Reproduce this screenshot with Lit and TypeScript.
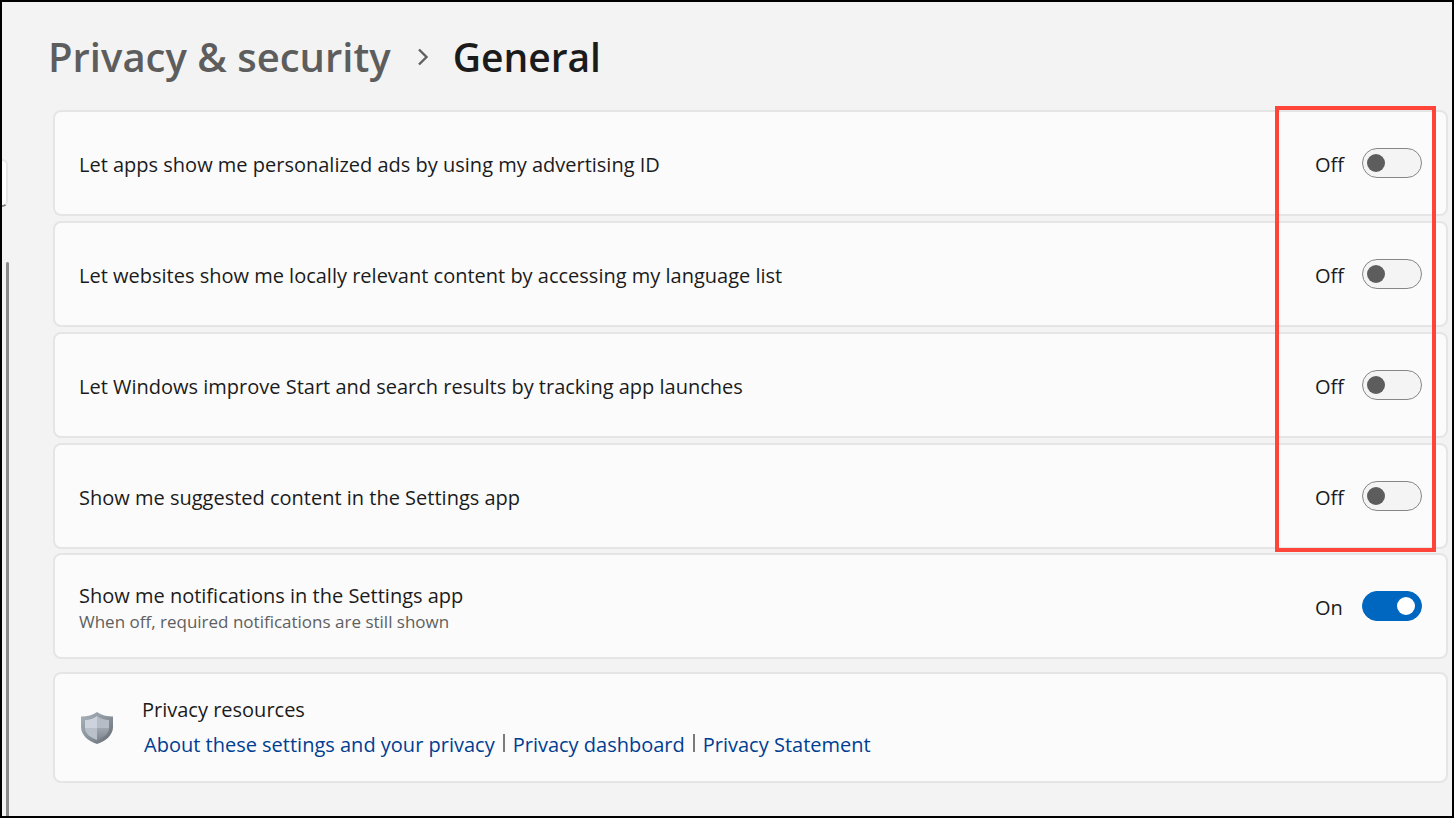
import { LitElement, html, css, nothing } from "lit";
import { customElement, property, state } from "lit/decorators.js";

interface Setting {
  id: string;
  title: string;
  note?: string;
  on: boolean;
}

@customElement("setting-card")
class SettingCard extends LitElement {
  @property() name = "";
  @property() heading = "";
  @property() note = "";
  @property({ type: Boolean }) on = false;

  static styles = css`
    :host {
      display: block;
    }
    .card {
      box-sizing: border-box;
      display: flex;
      align-items: center;
      min-height: 106px;
      padding: 16px 24px;
      border: 2px solid #e5e5e5;
      border-radius: 8px;
      background: #fbfbfb;
    }
    .text {
      flex: 1;
      display: flex;
      flex-direction: column;
      padding-top: 4px;
    }
    .title {
      font-size: 20px;
      line-height: 28px;
      color: #1b1b1b;
    }
    .note {
      font-size: 17px;
      line-height: 24px;
      color: #606060;
    }
    .status {
      width: 47px;
      padding-top: 4px;
      font-size: 20px;
      line-height: 28px;
      color: #1b1b1b;
    }
    .switch {
      appearance: none;
      box-sizing: border-box;
      display: flex;
      align-items: center;
      width: 60px;
      height: 30px;
      margin: 0;
      padding: 0 4px;
      border: 1px solid #868686;
      border-radius: 15px;
      background: #f4f4f4;
    }
    .switch::before {
      content: "";
      width: 18px;
      height: 18px;
      border-radius: 50%;
      background: #5d5d5d;
    }
    .switch:checked {
      justify-content: flex-end;
      padding: 0 6px;
      border-color: #0067c0;
      background: #0067c0;
    }
    .switch:checked::before {
      background: #ffffff;
    }
  `;

  private toggle(e: Event) {
    this.on = (e.target as HTMLInputElement).checked;
  }

  render() {
    return html`
      <div class="card">
        <label class="text" for=${this.name}>
          <span class="title">${this.heading}</span>
          ${this.note ? html`<span class="note">${this.note}</span>` : nothing}
        </label>
        <span class="status">${this.on ? "On" : "Off"}</span>
        <input
          class="switch"
          type="checkbox"
          role="switch"
          id=${this.name}
          .checked=${this.on}
          @change=${this.toggle}
        />
      </div>
    `;
  }
}

@customElement("app-root")
class AppRoot extends LitElement {
  @state() private settings: Setting[] = [
    { id: "ads", title: "Let apps show me personalized ads by using my advertising ID", on: false },
    { id: "language", title: "Let websites show me locally relevant content by accessing my language list", on: false },
    { id: "launches", title: "Let Windows improve Start and search results by tracking app launches", on: false },
    { id: "suggested", title: "Show me suggested content in the Settings app", on: false },
    {
      id: "notifications",
      title: "Show me notifications in the Settings app",
      note: "When off, required notifications are still shown",
      on: true,
    },
  ];

  static styles = css`
    :host {
      display: block;
      font-family: "Segoe UI", "Open Sans", "Noto Sans", sans-serif;
      color: #1b1b1b;
    }
    .window {
      box-sizing: border-box;
      display: flex;
      min-height: 100vh;
      border: 2px solid #000000;
      background: #f3f3f3;
      overflow: hidden;
    }
    .nav {
      display: flex;
      flex-direction: column;
      gap: 55px;
      width: 7px;
      padding-top: 157px;
    }
    .search-edge {
      box-sizing: border-box;
      height: 48px;
      width: 6px;
      border: 2px solid #e5e5e5;
      border-left: 0;
      border-bottom-color: #868686;
      border-radius: 0 6px 6px 0;
      background: #ffffff;
    }
    .scrollbar {
      flex: 1;
      width: 3px;
      margin-left: 4px;
      border-radius: 2px 2px 0 0;
      background: #8a8a8a;
    }
    .main {
      flex: 1;
      padding: 27px 4px 32px 44px;
    }
    .crumbs {
      display: flex;
      align-items: center;
      margin: 0 0 25px -5px;
      font-size: 40px;
      line-height: 56px;
      font-weight: 600;
    }
    .parent {
      color: #5d5d5d;
      text-decoration: none;
    }
    .chevron {
      width: 12px;
      height: 18px;
      margin: 0 24px 0 26px;
    }
    .current {
      margin: 0;
      font-size: 39px;
      line-height: 56px;
      font-weight: 600;
    }
    .group {
      position: relative;
      display: grid;
      gap: 5px;
      margin-bottom: 4px;
    }
    .highlight {
      position: absolute;
      top: -4px;
      bottom: -3px;
      right: 12px;
      width: 161px;
      box-sizing: border-box;
      border: 4px solid #ff4539;
      pointer-events: none;
    }
    .resources {
      box-sizing: border-box;
      display: flex;
      align-items: center;
      gap: 27px;
      min-height: 111px;
      margin-top: 13px;
      padding: 16px 24px;
      border: 2px solid #e5e5e5;
      border-radius: 8px;
      background: #fbfbfb;
    }
    .shield {
      width: 36px;
      height: 36px;
    }
    .resources-title {
      margin: 0 0 7px;
      font-size: 20px;
      line-height: 28px;
      font-weight: 400;
    }
    .links {
      display: flex;
      padding-left: 2px;
      font-size: 20px;
      line-height: 28px;
    }
    .link {
      color: #003e92;
      text-decoration: none;
    }
    .link + .link::before {
      content: "";
      display: inline-block;
      width: 2px;
      height: 18px;
      margin: 0 8px;
      background: #7a7a7a;
    }
  `;

  private card(s: Setting) {
    return html`<setting-card
      .name=${s.id}
      .heading=${s.title}
      .note=${s.note ?? ""}
      .on=${s.on}
    ></setting-card>`;
  }

  render() {
    return html`
      <div class="window">
        <div class="nav">
          <div class="search-edge"></div>
          <div class="scrollbar"></div>
        </div>
        <main class="main">
          <nav class="crumbs">
            <a class="parent" href="#">Privacy &amp; security</a>
            <svg class="chevron" viewBox="0 0 12 18" fill="none" stroke="#606060" stroke-width="2.4">
              <path d="M2 1.500 L9.500 9 L2 16.500" />
            </svg>
            <h1 class="current">General</h1>
          </nav>
          <div class="group">
            ${this.settings.slice(0, 4).map((s) => this.card(s))}
            <div class="highlight"></div>
          </div>
          ${this.settings.slice(4).map((s) => this.card(s))}
          <section class="resources">
            <svg class="shield" viewBox="0 0 36 36">
              <defs>
                <linearGradient id="rim" x1="0" y1="0" x2="1" y2="1">
                  <stop offset="0" stop-color="#a9b3bc" />
                  <stop offset="0.5" stop-color="#8b949d" />
                  <stop offset="1" stop-color="#63686f" />
                </linearGradient>
                <linearGradient id="low" x1="0" y1="0" x2="0" y2="1">
                  <stop offset="0" stop-color="#a0a7b0" />
                  <stop offset="1" stop-color="#7f868f" />
                </linearGradient>
              </defs>
              <path fill="url(#rim)" d="M18 2 C22 5 28 6.500 34 6.500 V17 C34 25 27 31 18 34 C9 31 2 25 2 17 V6.500 C8 6.500 14 5 18 2 Z" />
              <path fill="#cdd3dc" d="M18 6 V18 H6 V10 C10 10 15 8.500 18 6 Z" />
              <path fill="#b5bcc5" d="M18 6 C21 8.500 26 10 30 10 V18 H18 Z" />
              <path fill="#b9c0c9" d="M6 18 H18 V30 C11 27.500 6 23.500 6 18 Z" />
              <path fill="url(#low)" d="M30 18 H18 V30 C25 27.500 30 23.500 30 18 Z" />
            </svg>
            <div>
              <h2 class="resources-title">Privacy resources</h2>
              <div class="links">
                <a class="link" href="#">About these settings and your privacy</a>
                <a class="link" href="#">Privacy dashboard</a>
                <a class="link" href="#">Privacy Statement</a>
              </div>
            </div>
          </section>
        </main>
      </div>
    `;
  }
}
